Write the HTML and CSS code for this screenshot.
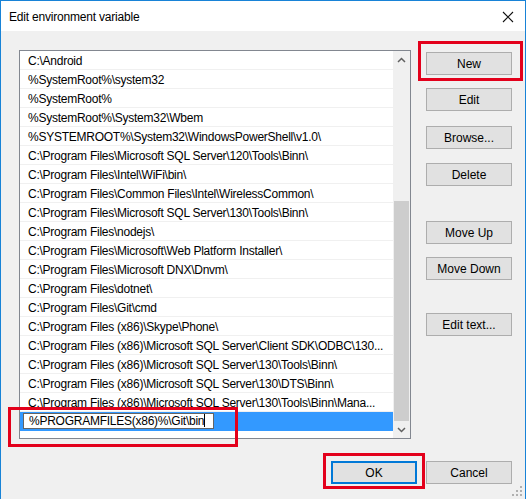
FILE: index.html
```html
<!DOCTYPE html>
<html>
<head>
<meta charset="utf-8">
<link rel="stylesheet" href="styles.css">
</head>
<body>
<div class="window">
  <div class="titlebar">
    <span class="title">Edit environment variable</span>
    <svg class="close" width="12" height="12" viewBox="0 0 12 12"><path d="M1 1L11 11M11 1L1 11" stroke="#111" stroke-width="1.1" fill="none"/></svg>
  </div>
  <div class="content">
    <div class="main">
      <div class="list">
        <div class="rows">
          <div class="row">C:\Android</div>
          <div class="row">%SystemRoot%\system32</div>
          <div class="row">%SystemRoot%</div>
          <div class="row">%SystemRoot%\System32\Wbem</div>
          <div class="row">%SYSTEMROOT%\System32\WindowsPowerShell\v1.0\</div>
          <div class="row">C:\Program Files\Microsoft SQL Server\120\Tools\Binn\</div>
          <div class="row">C:\Program Files\Intel\WiFi\bin\</div>
          <div class="row">C:\Program Files\Common Files\Intel\WirelessCommon\</div>
          <div class="row">C:\Program Files\Microsoft SQL Server\130\Tools\Binn\</div>
          <div class="row">C:\Program Files\nodejs\</div>
          <div class="row">C:\Program Files\Microsoft\Web Platform Installer\</div>
          <div class="row">C:\Program Files\Microsoft DNX\Dnvm\</div>
          <div class="row">C:\Program Files\dotnet\</div>
          <div class="row">C:\Program Files\Git\cmd</div>
          <div class="row">C:\Program Files (x86)\Skype\Phone\</div>
          <div class="row">C:\Program Files (x86)\Microsoft SQL Server\Client SDK\ODBC\130...</div>
          <div class="row">C:\Program Files (x86)\Microsoft SQL Server\130\Tools\Binn\</div>
          <div class="row">C:\Program Files (x86)\Microsoft SQL Server\130\DTS\Binn\</div>
          <div class="row">C:\Program Files (x86)\Microsoft SQL Server\130\Tools\Binn\Mana...</div>
          <div class="row selected"><div class="editbox">%PROGRAMFILES(x86)%\Git\bin<span class="caret"></span></div></div>
        </div>
        <div class="scrollbar">
          <div class="arrow"><svg width="9" height="6" viewBox="0 0 9 6"><path d="M1 5L4.5 1.5L8 5" stroke="#606060" stroke-width="1.5" fill="none"/></svg></div>
          <div class="track"><div class="thumb"></div></div>
          <div class="arrow"><svg width="9" height="6" viewBox="0 0 9 6"><path d="M1 1L4.5 4.5L8 1" stroke="#606060" stroke-width="1.5" fill="none"/></svg></div>
        </div>
      </div>
      <div class="side">
        <button class="btn b-new">New</button>
        <button class="btn b-edit">Edit</button>
        <button class="btn b-browse">Browse...</button>
        <button class="btn b-delete">Delete</button>
        <button class="btn b-up">Move Up</button>
        <button class="btn b-down">Move Down</button>
        <button class="btn b-text">Edit text...</button>
      </div>
    </div>
    <div class="footer">
      <button class="btn ok">OK</button>
      <button class="btn cancel">Cancel</button>
    </div>
    <div class="mark mark-new"></div>
    <div class="mark mark-edit"></div>
    <div class="mark mark-ok"></div>
    <svg class="grip" width="10" height="10" viewBox="0 0 10 10" fill="#b0b0b0">
      <rect x="8" y="0" width="2" height="2"/>
      <rect x="4" y="4" width="2" height="2"/><rect x="8" y="4" width="2" height="2"/>
      <rect x="0" y="8" width="2" height="2"/><rect x="4" y="8" width="2" height="2"/><rect x="8" y="8" width="2" height="2"/>
    </svg>
  </div>
</div>
</body>
</html>
```

FILE: styles.css
```css
html, body {
  margin: 0;
  padding: 0;
}
body {
  width: 526px;
  height: 499px;
  overflow: hidden;
  background: #f0f0f0;
  font-family: "Liberation Sans", Arial, sans-serif;
  font-size: 12px;
  color: #000;
}
.window {
  box-sizing: border-box;
  width: 526px;
  height: 499px;
  border: 1px solid #1883d7;
  border-bottom: none;
  background: #f0f0f0;
}
.titlebar {
  height: 30px;
  background: #fff;
  display: flex;
  align-items: center;
  justify-content: space-between;
  padding: 0 11px 0 8px;
}
.title {
  font-size: 12px;
  padding-top: 1px;
  letter-spacing: -0.2px;
}
.close {
  display: block;
  margin-top: 1px;
}
.content {
  position: relative;
  height: 467px;
  padding: 19px 13px 0 18px;
  box-sizing: border-box;
}
.main {
  display: flex;
  align-items: flex-start;
}
.list {
  box-sizing: border-box;
  width: 392px;
  height: 389px;
  border: 1px solid #828790;
  background: #fff;
  display: flex;
}
.rows {
  flex: 1;
  min-width: 0;
}
.row {
  box-sizing: border-box;
  height: 19px;
  line-height: 21px;
  padding: 0 4px 0 8px;
  border-bottom: 1px solid #f0f0f0;
  white-space: nowrap;
  overflow: hidden;
  letter-spacing: -0.25px;
}
.row.selected {
  background: #3399ff;
  border-bottom: none;
  padding: 1px 0 0 3px;
}
.editbox {
  box-sizing: border-box;
  width: 191px;
  height: 16px;
  line-height: 15px;
  border: 1px solid #646464;
  background: #fff;
  padding-left: 5px;
}
.caret {
  display: inline-block;
  width: 1px;
  height: 13px;
  background: #000;
  vertical-align: -2px;
}
.scrollbar {
  width: 17px;
  background: #f0f0f0;
  display: flex;
  flex-direction: column;
}
.arrow {
  height: 17px;
  display: flex;
  align-items: center;
  justify-content: center;
}
.track {
  flex: 1;
}
.thumb {
  margin: 133px 1px 0 1px;
  height: 220px;
  background: #cdcdcd;
}
.side {
  margin-left: 15px;
  display: flex;
  flex-direction: column;
}
.btn {
  box-sizing: border-box;
  width: 86px;
  height: 23px;
  padding: 0;
  border: 1px solid #adadad;
  background: #e1e1e1;
  font-family: "Liberation Sans", Arial, sans-serif;
  font-size: 12px;
  color: #000;
}
.b-new { margin-top: 2px; }
.b-edit { margin-top: 13px; }
.b-browse { margin-top: 15px; }
.b-delete { margin-top: 14px; }
.b-up { margin-top: 35px; }
.b-down { margin-top: 13px; }
.b-text { margin-top: 33px; }
.footer {
  display: flex;
  justify-content: flex-end;
  gap: 9px;
  margin-top: 22px;
}
.btn.ok {
  border: 2px solid #0078d7;
}
.mark {
  position: absolute;
  box-sizing: border-box;
  border: 3px solid #e3001b;
}
.mark-new {
  left: 417px;
  top: 10px;
  width: 105px;
  height: 40px;
}
.mark-edit {
  left: 7px;
  top: 376px;
  width: 230px;
  height: 40px;
}
.mark-ok {
  left: 322px;
  top: 422px;
  width: 102px;
  height: 36px;
}
.grip {
  position: absolute;
  right: 3px;
  bottom: 2px;
}
```
